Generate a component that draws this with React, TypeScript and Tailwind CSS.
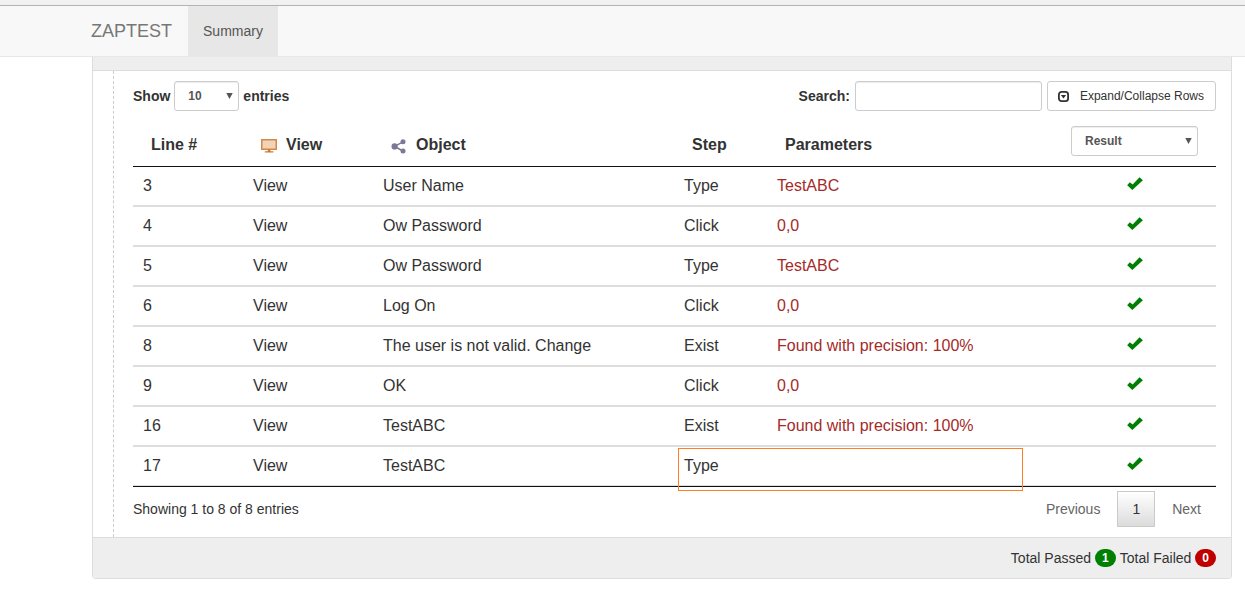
interface Step {
  line: number;
  view: string;
  object: string;
  step: string;
  parameters: string;
  highlighted?: boolean;
}

const steps: Step[] = [
  { line: 3, view: "View", object: "User Name", step: "Type", parameters: "TestABC" },
  { line: 4, view: "View", object: "Ow Password", step: "Click", parameters: "0,0" },
  { line: 5, view: "View", object: "Ow Password", step: "Type", parameters: "TestABC" },
  { line: 6, view: "View", object: "Log On", step: "Click", parameters: "0,0" },
  { line: 8, view: "View", object: "The user is not valid. Change", step: "Exist", parameters: "Found with precision: 100%" },
  { line: 9, view: "View", object: "OK", step: "Click", parameters: "0,0" },
  { line: 16, view: "View", object: "TestABC", step: "Exist", parameters: "Found with precision: 100%" },
  { line: 17, view: "View", object: "TestABC", step: "Type", parameters: "", highlighted: true },
];

function CheckIcon() {
  return (
    <svg className="w-4 h-[13px] mx-auto" viewBox="0 0 16 13" role="img" aria-label="Passed">
      <path d="M0.2 8.3L2.8 5.2L5.6 7.4L12.6 0.2L15.9 3.2L5.3 13Z" fill="#008000" />
    </svg>
  );
}

function MonitorIcon() {
  return (
    <svg className="w-4 h-[14px] mt-[2px]" viewBox="0 0 16 14" aria-hidden="true">
      <rect x="0.75" y="0.75" width="14.5" height="9.5" fill="#f1d3b8" stroke="#d18b47" strokeWidth="1.5" />
      <path d="M6.8 10.5h2.6v1.8h3v1.2H3.8v-1.2h3z" fill="#c9782e" />
    </svg>
  );
}

function ShareIcon() {
  return (
    <svg className="w-[15px] h-[15px] mt-[2px]" viewBox="0 0 15 15" aria-hidden="true">
      <path d="M12 2.8L3.5 7.4L12 12" fill="none" stroke="#7c7896" strokeWidth="1.5" />
      <circle cx="3.6" cy="7.4" r="3.1" fill="#7c7896" />
      <circle cx="12" cy="2.8" r="2.5" fill="#7c7896" />
      <circle cx="12" cy="12" r="2.5" fill="#7c7896" />
    </svg>
  );
}

function CollapseIcon() {
  return (
    <svg className="w-[11px] h-[11px]" viewBox="0 0 11 11" aria-hidden="true">
      <rect x="0.9" y="0.9" width="9.2" height="9.2" rx="2.6" fill="none" stroke="#333" strokeWidth="1.8" />
      <path d="M2.9 4h5.2L5.5 7.4z" fill="#333" />
    </svg>
  );
}

interface DropdownProps {
  label: string;
  options: string[];
  className: string;
}

function Dropdown({ label, options, className }: DropdownProps) {
  return (
    <span className={`relative block ${className}`}>
      <select
        aria-label={label}
        className="appearance-none block w-full h-[30px] pl-[13px] rounded-[3px] border border-[#ccc] bg-white text-xs font-bold text-[#555] shadow-[inset_0_1px_1px_rgba(0,0,0,0.075)]"
      >
        {options.map((option) => (
          <option key={option}>{option}</option>
        ))}
      </select>
      <svg className="absolute right-[6px] top-3 w-[7px] h-[6px] pointer-events-none" viewBox="0 0 7 6" aria-hidden="true">
        <path d="M0.3 0h6.4L3.5 6z" fill="#555" />
      </svg>
    </span>
  );
}

export default function App() {
  return (
    <div className="min-h-screen bg-white pb-4 font-['Liberation_Sans',Arial,sans-serif] text-sm text-[#333]">
      <div className="h-[6px] bg-[#f1f1f1] border-b border-[#b4b4b4]" />
      <nav className="flex h-[51px] pl-[91px] bg-[#f8f8f8] border-b border-[#e7e7e7]">
        <a href="#" className="flex items-center pr-4 text-lg text-[#777]">
          ZAPTEST
        </a>
        <a href="#summary" className="flex items-center px-[15px] bg-[#e7e7e7] text-[#555]">
          Summary
        </a>
      </nav>

      <main className="ml-[92px] mr-[13px] border border-t-0 border-[#ddd] rounded-b">
        <div className="h-[14px] bg-[#eee] border-b border-[#ddd]" />

        <div className="ml-5 pt-[10px] pb-[10px] pl-[19px] pr-[15px] border-l border-dashed border-[#ccc]">
          <div className="flex justify-between">
            <label className="flex items-center gap-1 font-bold">
              Show
              <Dropdown label="Entries per page" options={["10", "25", "50", "100"]} className="w-[65px]" />
              entries
            </label>
            <div className="flex items-center gap-[5px]">
              <label className="flex items-center gap-[5px] font-bold">
                Search:
                <input
                  type="search"
                  className="w-[187px] h-[30px] px-[10px] rounded-[3px] border border-[#ccc] bg-white text-xs font-normal shadow-[inset_0_1px_1px_rgba(0,0,0,0.075)]"
                />
              </label>
              <button
                type="button"
                className="flex items-center gap-[11px] h-[30px] pl-[10px] pr-[11px] rounded-[3px] border border-[#ccc] bg-white text-xs"
              >
                <CollapseIcon />
                Expand/Collapse Rows
              </button>
            </div>
          </div>

          <table className="w-full mt-[5px] table-fixed border-separate border-spacing-0 border-b border-[#111] text-base">
            <colgroup>
              <col className="w-[110px]" />
              <col className="w-[130px]" />
              <col className="w-[301px]" />
              <col className="w-[93px]" />
              <col />
              <col className="w-[163px]" />
            </colgroup>
            <thead>
              <tr className="text-left align-bottom [&_th]:px-[18px] [&_th]:pb-[9px] [&_th]:border-b [&_th]:border-[#111]">
                <th>Line #</th>
                <th>
                  <span className="flex items-center gap-[9px]">
                    <MonitorIcon />
                    View
                  </span>
                </th>
                <th>
                  <span className="flex items-center gap-[10px]">
                    <ShareIcon />
                    Object
                  </span>
                </th>
                <th>Step</th>
                <th>Parameters</th>
                <th className="pt-[10px]">
                  <Dropdown label="Result" options={["Result", "Passed", "Failed"]} className="w-full mb-px" />
                </th>
              </tr>
            </thead>
            <tbody className="[&_td]:h-10 [&_td]:px-[10px] [&_td]:border-b-2 [&_td]:border-[#ddd] [&_tr:last-child_td]:h-[39px] [&_tr:last-child_td]:border-b">
              {steps.map((row) => (
                <tr key={row.line}>
                  <td>{row.line}</td>
                  <td>{row.view}</td>
                  <td>{row.object}</td>
                  <td className="relative">
                    {row.step}
                    {row.highlighted && (
                      <span className="absolute left-1 top-px w-[345px] h-[43px] border border-[#ff7f27] pointer-events-none" />
                    )}
                  </td>
                  <td className="text-[#a52a2a]">{row.parameters}</td>
                  <td className="pb-[6px]">
                    <CheckIcon />
                  </td>
                </tr>
              ))}
            </tbody>
          </table>

          <div className="flex items-center justify-between mt-1">
            <p>Showing 1 to 8 of 8 entries</p>
            <div className="flex gap-[2px] text-[#666]">
              <button type="button" className="px-[14px] py-[7px] border border-transparent">
                Previous
              </button>
              <button
                type="button"
                className="px-[14px] py-[7px] border border-[#cacaca] bg-linear-to-b from-white to-[#dcdcdc] text-[#333]"
              >
                1
              </button>
              <button type="button" className="px-[14px] py-[7px] border border-transparent">
                Next
              </button>
            </div>
          </div>
        </div>

        <footer className="flex items-center justify-end gap-1 h-[41px] pr-[15px] bg-[#eee] border-t border-[#ddd] rounded-b">
          <span>Total Passed</span>
          <span className="px-[7px] rounded-[10px] bg-[#008000] text-xs leading-[18px] font-bold text-white">1</span>
          <span>Total Failed</span>
          <span className="px-[7px] rounded-[10px] bg-[#c00000] text-xs leading-[18px] font-bold text-white">0</span>
        </footer>
      </main>
    </div>
  );
}
